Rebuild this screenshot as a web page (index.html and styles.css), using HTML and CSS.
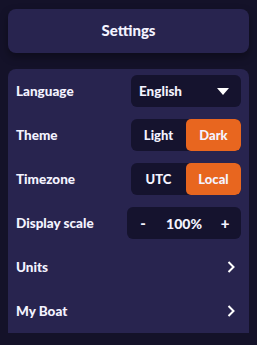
FILE: index.html
```html
<!DOCTYPE html>
<html>
<head>
    <title>Settings</title>
    <meta charset="UTF-8">
    <link rel="stylesheet" href="styles.css">
</head>
<body>
    <div class="header">Settings</div>

    <div class="panel">
        <div class="row">
            <span class="label">Language</span>
            <div class="select">
                <span>English</span>
                <svg width="12" height="7" viewBox="0 0 12 7"><polygon points="0,0 12,0 6,7" fill="#ffffff"/></svg>
            </div>
        </div>
        <div class="row">
            <span class="label">Theme</span>
            <div class="toggle">
                <button>Light</button>
                <button class="active">Dark</button>
            </div>
        </div>
        <div class="row">
            <span class="label">Timezone</span>
            <div class="toggle">
                <button>UTC</button>
                <button class="active">Local</button>
            </div>
        </div>
        <div class="row">
            <span class="label">Display scale</span>
            <div class="stepper">
                <button>-</button>
                <span class="value">100%</span>
                <button>+</button>
            </div>
        </div>
        <div class="row link">
            <span class="label">Units</span>
            <svg class="chevron" width="8" height="12" viewBox="0 0 8 12"><polyline points="1.5,1 6.5,6 1.5,11" fill="none" stroke="#ffffff" stroke-width="2"/></svg>
        </div>
        <div class="row link">
            <span class="label">My Boat</span>
            <svg class="chevron" width="8" height="12" viewBox="0 0 8 12"><polyline points="1.5,1 6.5,6 1.5,11" fill="none" stroke="#ffffff" stroke-width="2"/></svg>
        </div>
    </div>
</body>
</html>
```

FILE: styles.css
```css
/* tema escuro do painel de configurações */
body {
    font-family: Lato, "Noto Sans", sans-serif;
    font-weight: 900;
    background-color: #141229;
    color: #f4f3ff;
    margin: 0;
    padding: 9px 8px 0 8px;
    height: 345px;
    box-sizing: border-box;
    overflow: hidden;
}
.header {
    height: 44px;
    line-height: 43px;
    background-color: #28244f;
    border-radius: 8px;
    text-align: center;
    font-size: 15px;
    box-shadow: 0 4px 8px rgba(0, 0, 0, 0.35);
}
.panel {
    margin-top: 16px;
    background-color: #28244f;
    border-radius: 8px 8px 0 0;
    padding: 6px 8px 6px 8px;
    display: flex;
    flex-direction: column;
    gap: 12px;
}
.row {
    height: 32px;
    display: flex;
    align-items: center;
    justify-content: space-between;
}
.label {
    font-size: 13.5px;
    margin-top: -1px;
}
.select {
    width: 110px;
    height: 32px;
    box-sizing: border-box;
    padding: 0 12px 0 8px;
    background-color: #15132e;
    border-radius: 6px;
    display: flex;
    align-items: center;
    justify-content: space-between;
    font-size: 13.5px;
}
.toggle {
    width: 110px;
    height: 32px;
    display: flex;
    background-color: #15132e;
    border-radius: 6px;
    overflow: hidden;
}
.toggle button {
    flex: 1;
    border: none;
    background: none;
    color: #f4f3ff;
    font-family: inherit;
    font-weight: 900;
    font-size: 13px;
    padding: 0;
    border-radius: 5px;
}
.toggle button.active {
    background-color: #e8661f;
}
.stepper {
    width: 114px;
    height: 32px;
    display: flex;
    align-items: center;
    justify-content: space-between;
    background-color: #15132e;
    border-radius: 6px;
    padding: 0 6px;
    box-sizing: border-box;
    font-size: 14px;
}
.stepper button {
    width: 20px;
    border: none;
    background: none;
    color: #f4f3ff;
    font-family: inherit;
    font-weight: 900;
    font-size: 15px;
    padding: 0;
}
.chevron {
    margin-right: 6px;
}
```
